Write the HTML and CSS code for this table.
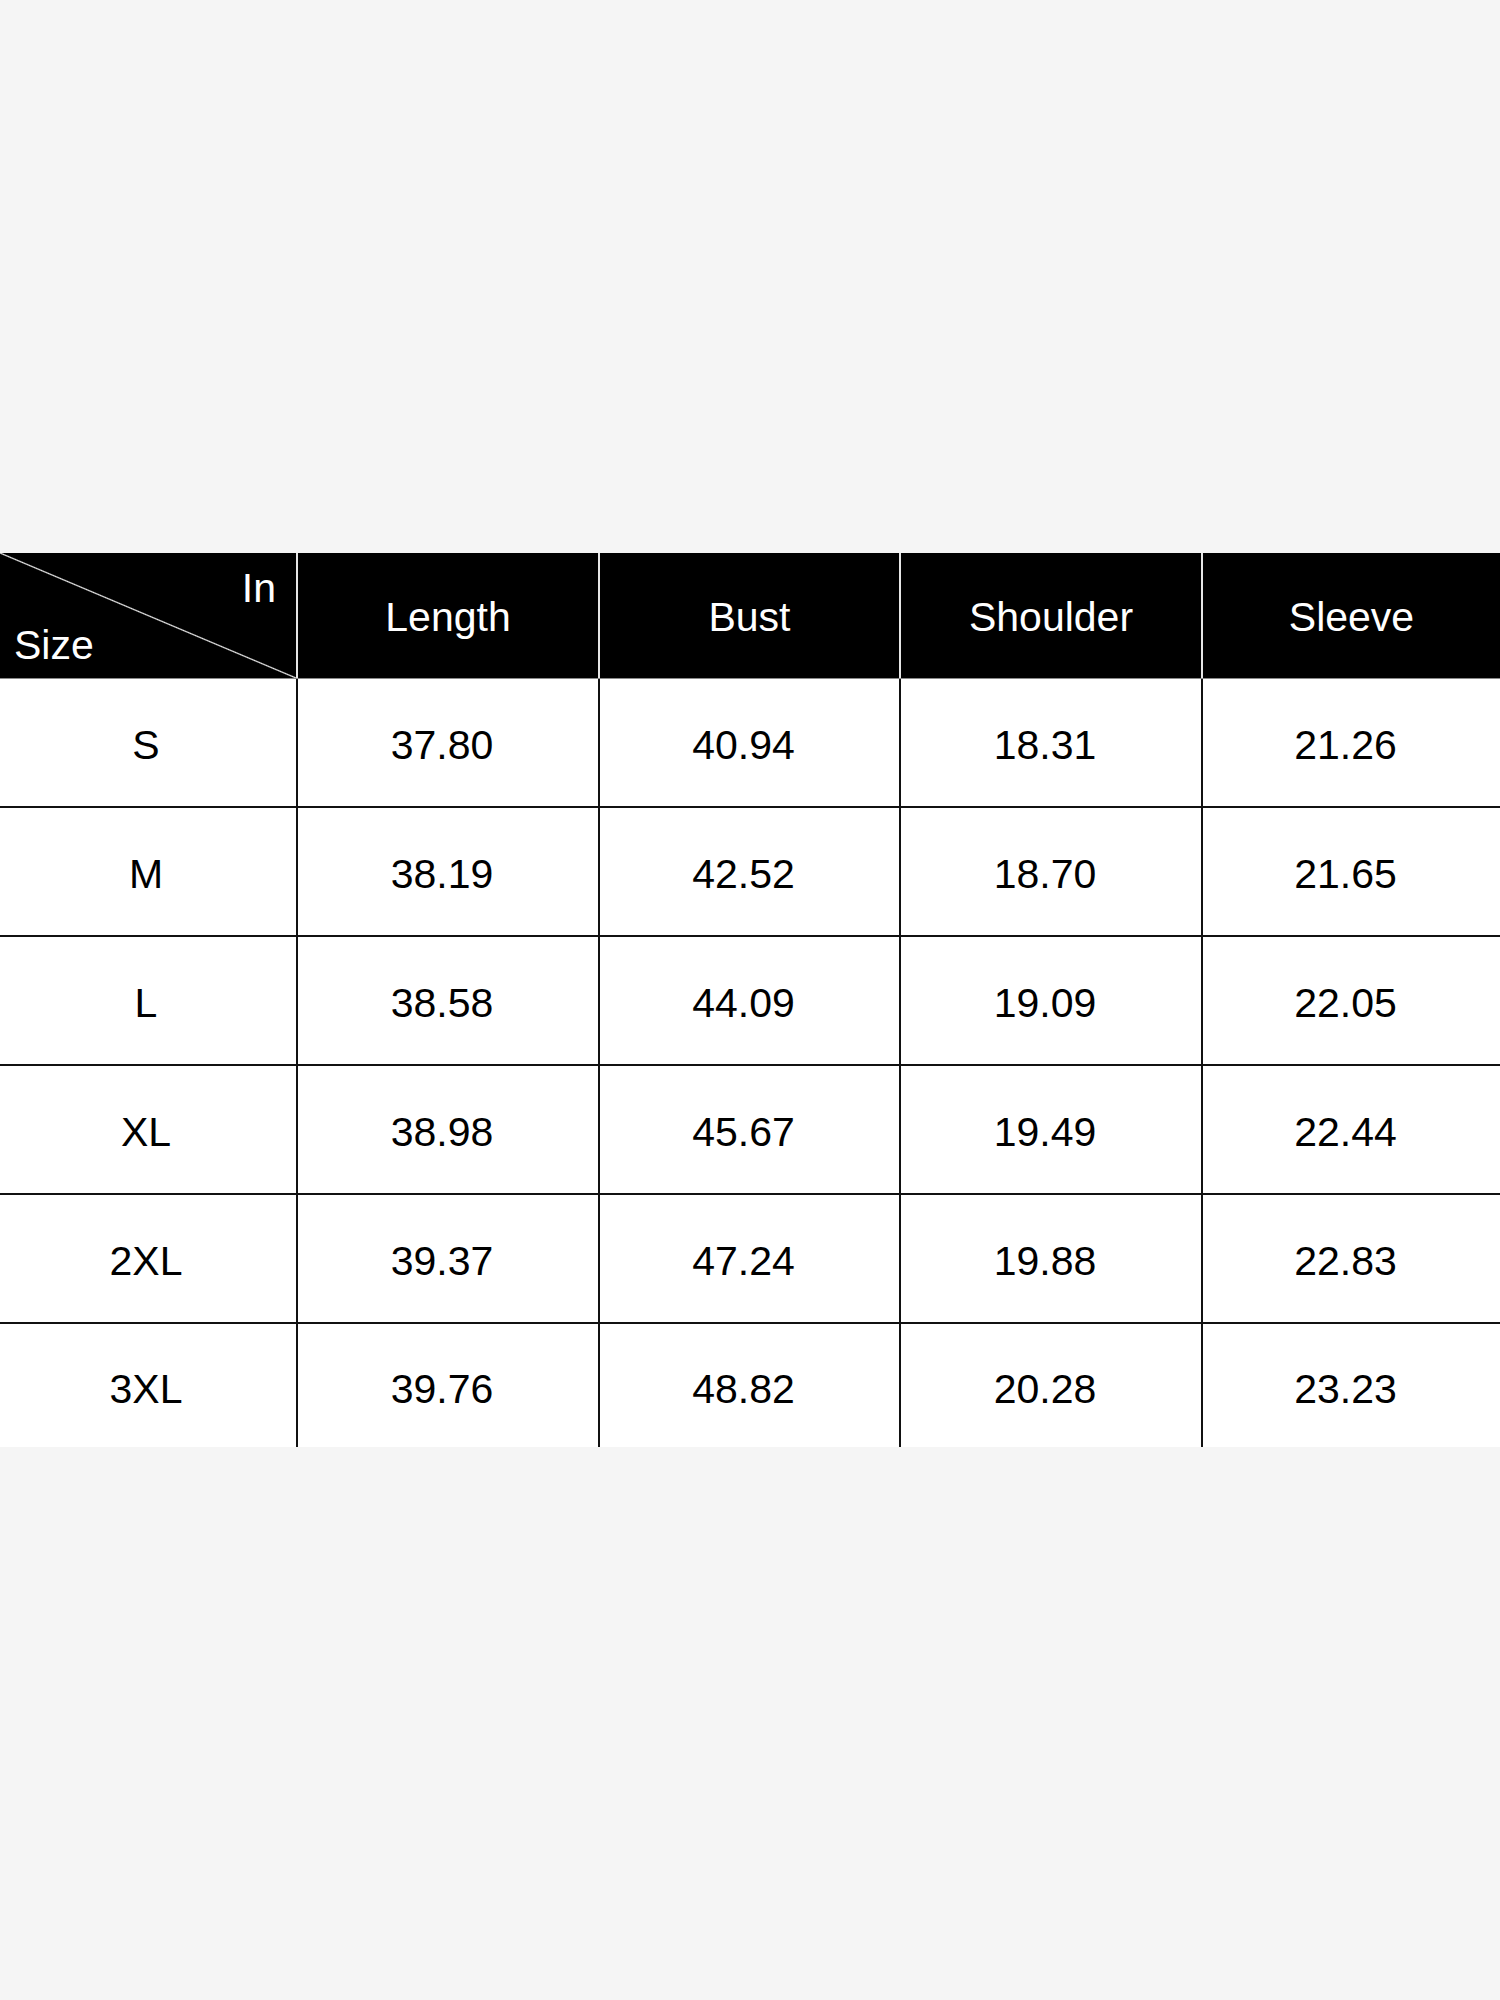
FILE: index.html
```html
<!DOCTYPE html>
<html>
<head>
<meta charset="utf-8">
<title>Size chart</title>
<link rel="stylesheet" href="styles.css">
</head>
<body>
<main class="page">
  <div class="chart">
    <div class="row head">
      <div class="cell corner">
        <span class="unit">In</span>
        <span class="size-label">Size</span>
      </div>
      <div class="cell">Length</div>
      <div class="cell">Bust</div>
      <div class="cell">Shoulder</div>
      <div class="cell">Sleeve</div>
    </div>
    <div class="row">
      <div class="cell">S</div><div class="cell">37.80</div><div class="cell">40.94</div><div class="cell">18.31</div><div class="cell">21.26</div>
    </div>
    <div class="row">
      <div class="cell">M</div><div class="cell">38.19</div><div class="cell">42.52</div><div class="cell">18.70</div><div class="cell">21.65</div>
    </div>
    <div class="row">
      <div class="cell">L</div><div class="cell">38.58</div><div class="cell">44.09</div><div class="cell">19.09</div><div class="cell">22.05</div>
    </div>
    <div class="row">
      <div class="cell">XL</div><div class="cell">38.98</div><div class="cell">45.67</div><div class="cell">19.49</div><div class="cell">22.44</div>
    </div>
    <div class="row">
      <div class="cell">2XL</div><div class="cell">39.37</div><div class="cell">47.24</div><div class="cell">19.88</div><div class="cell">22.83</div>
    </div>
    <div class="row last">
      <div class="cell">3XL</div><div class="cell">39.76</div><div class="cell">48.82</div><div class="cell">20.28</div><div class="cell">23.23</div>
    </div>
  </div>
</main>
</body>
</html>
```

FILE: styles.css
```css
* {
  box-sizing: border-box;
}

html, body {
  margin: 0;
  padding: 0;
  background: #f5f5f5;
}

body {
  font-family: "Liberation Sans", Arial, Helvetica, sans-serif;
  width: 1500px;
  height: 2000px;
}

.page {
  padding-top: 553px;
}

.chart {
  background: #ffffff;
  width: 1500px;
}

.row {
  display: grid;
  grid-template-columns: 296px 302px 301px 302px 299px;
  height: 129px;
  border-bottom: 2px solid #111111;
}

.row.last {
  height: 123px;
  border-bottom: none;
}

.cell {
  display: flex;
  align-items: center;
  justify-content: center;
  font-size: 41px;
  color: #000000;
  border-left: 2px solid #111111;
  padding-top: 5px;
  padding-right: 12px;
}

.cell:first-child {
  border-left: none;
  padding-right: 4px;
}

.row.last .cell {
  padding-top: 8px;
}

.row.head {
  height: 126px;
  background: #000000;
  border-bottom: 1px solid #8a8a8a;
}

.row.head .cell {
  color: #ffffff;
  border-left: 2px solid #e6e6e6;
  padding-top: 4px;
  padding-right: 0;
}

.row.head .cell.corner {
  border-left: none;
  display: flex;
  flex-direction: column;
  align-items: stretch;
  justify-content: space-between;
  padding: 15px 20px 12px 14px;
  background: linear-gradient(to top right, #000000 calc(50% - 1.2px), #e8e8e8 50%, #000000 calc(50% + 1.2px));
}

.unit {
  align-self: flex-end;
  line-height: 1;
}

.size-label {
  align-self: flex-start;
  line-height: 1;
}
```
